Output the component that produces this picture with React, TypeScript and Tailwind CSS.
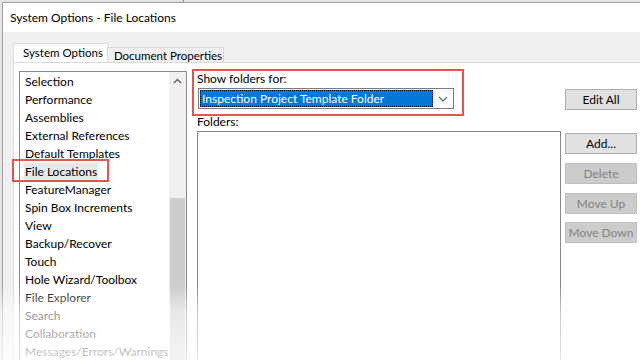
import React from "react";

const items: { label: string; selected?: boolean }[] = [
  { label: "Selection" },
  { label: "Performance" },
  { label: "Assemblies" },
  { label: "External References" },
  { label: "Default Templates" },
  { label: "File Locations", selected: true },
  { label: "FeatureManager" },
  { label: "Spin Box Increments" },
  { label: "View" },
  { label: "Backup/Recover" },
  { label: "Touch" },
  { label: "Hole Wizard/Toolbox" },
  { label: "File Explorer" },
  { label: "Search" },
  { label: "Collaboration" },
  { label: "Messages/Errors/Warnings" },
];

function Btn({ label, disabled, className = "" }: { label: string; disabled?: boolean; className?: string }) {
  return (
    <div
      className={
        "w-[72px] h-[21px] flex items-center justify-center border text-[12px] leading-none " +
        (disabled
          ? "bg-[#cccccc] border-[#bfbfbf] text-[#838383] "
          : "bg-[#e1e1e1] border-[#adadad] text-black ") +
        className
      }
    >
      {label}
    </div>
  );
}

export default function App() {
  return (
    <div
      className="relative w-[640px] h-[360px] overflow-hidden bg-[#e3e3e3] pl-[2px] pt-[2px]"
      style={{ fontFamily: "Lato, 'Liberation Sans', sans-serif" }}
    >
      <div className="absolute left-[183px] top-0 w-px h-[2px] bg-[#8a8a8a]" />
      <div className="w-full h-full flex flex-col border-l border-t border-[#a0a0a0] bg-white">
        {/* title */}
        <div className="h-[29px] flex items-center pl-[7px] text-[12px] text-black bg-white shrink-0">
          System Options - File Locations
        </div>
        {/* body */}
        <div className="flex-1 flex flex-col bg-[#f0f0f0] pl-[10px] pt-[11px]">
          {/* tabs */}
          <div className="flex items-end h-[19px] shrink-0 relative z-10">
            <div className="w-[95px] h-[19px] bg-white border border-b-0 border-[#d9d9d9] flex items-center justify-center text-[11.5px] text-black pl-[5px]">
              System Options
            </div>
            <div className="w-[116px] h-[15px] bg-[#f0f0f0] border border-b-0 border-l-0 border-[#d9d9d9] flex items-center justify-center text-[11.5px] text-black pt-[1px] pl-[5px]">
              Document Properties
            </div>
          </div>
          {/* panel */}
          <div className="flex-1 bg-white border-t border-l border-[#d9d9d9] pl-[5px] pt-[8px] flex">
            {/* left list */}
            <div className="w-[168px] h-[320px] border border-[#828790] flex shrink-0">
              <div className="flex-1 flex flex-col pl-[5px] pt-[1px]">
                {items.map((it) => (
                  <div key={it.label} className="h-[18px] leading-[18px] text-[12px] text-black whitespace-nowrap">
                    {it.selected ? (
                      <span className="inline-block bg-[#e8e8e8] px-[1px] -ml-[1px] leading-[17px]">{it.label}</span>
                    ) : (
                      it.label
                    )}
                  </div>
                ))}
              </div>
              <div className="w-[17px] bg-[#f0f0f0] flex flex-col">
                <div className="h-[17px] flex items-center justify-center">
                  <svg width="9" height="6" viewBox="0 0 9 6">
                    <path d="M1 5 L4.5 1.5 L8 5" fill="none" stroke="#606060" strokeWidth="1.4" />
                  </svg>
                </div>
                <div className="h-[109px]" />
                <div className="flex-1 mx-[1px] bg-[#cdcdcd]" />
              </div>
            </div>
            {/* right area */}
            <div className="ml-[10px] flex flex-col">
              <div className="flex">
                <div className="w-[364px] flex flex-col">
                  <div className="h-[16px] leading-[16px] text-[12px] text-black">Show folders for:</div>
                  <div className="mt-[1px] ml-[1px] w-[256px] h-[21px] border border-[#7a7a7a] bg-white flex items-center">
                    <div className="ml-[1px] w-[233px] h-[17px] bg-[#0078d7] outline-1 outline-dotted outline-offset-[-1px] outline-black flex items-center pl-[2px] text-[12px] text-white whitespace-nowrap">
                      Inspection Project Template Folder
                    </div>
                    <div className="flex-1 flex items-center justify-center">
                      <svg width="10" height="6" viewBox="0 0 10 6">
                        <path d="M1 1 L5 5 L9 1" fill="none" stroke="#606060" strokeWidth="1.2" />
                      </svg>
                    </div>
                  </div>
                  <div className="mt-[5px] h-[16px] leading-[16px] text-[12px] text-black">Folders:</div>
                </div>
                <div className="ml-[4px] pt-[18px]">
                  <Btn label="Edit All" />
                </div>
              </div>
              <div className="flex mt-[1px]">
                <div className="w-[364px] h-[260px] border border-[#828790] bg-white" />
                <div className="ml-[4px] pt-[2px] flex flex-col">
                  <Btn label="Add..." />
                  <Btn label="Delete" disabled className="mt-[9px]" />
                  <Btn label="Move Up" disabled className="mt-[9px]" />
                  <Btn label="Move Down" disabled className="mt-[8px]" />
                </div>
              </div>
            </div>
          </div>
        </div>
      </div>

      {/* annotation boxes */}
      <div className="absolute left-[12px] top-[159px] w-[97px] h-[23px] border-2 border-[#e2574c] pointer-events-none" />
      <div className="absolute left-[192px] top-[69px] w-[272px] h-[47px] border-2 border-[#e2574c] pointer-events-none" />

      {/* bottom fade */}
      <div className="absolute left-0 right-0 top-[285px] h-[75px] pointer-events-none bg-[linear-gradient(to_bottom,rgba(255,255,255,0)_0px,rgba(255,255,255,0.55)_27px,rgba(255,255,255,0.66)_50px,rgba(255,255,255,0.78)_75px)]" />
    </div>
  );
}
